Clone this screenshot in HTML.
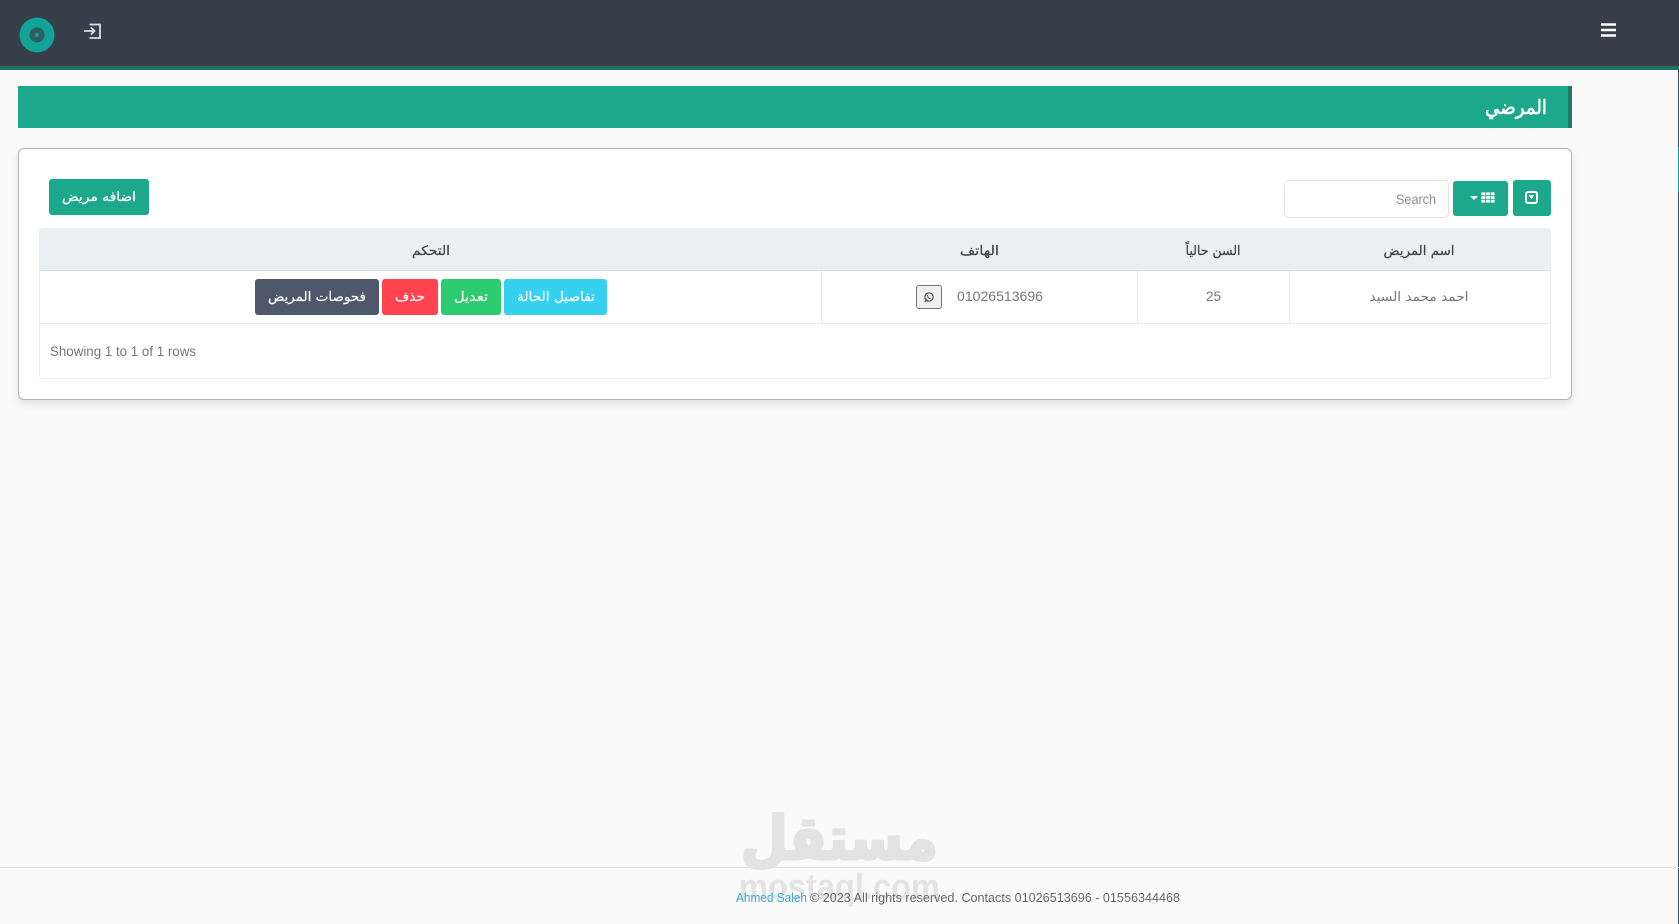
<!DOCTYPE html>
<html lang="ar"><head><meta charset="utf-8"><title>المرضي</title>
<style>
html,body{margin:0;padding:0;width:1679px;height:924px;overflow:hidden;background:#fafafa}
.a{position:absolute;box-sizing:border-box}
svg{position:absolute;left:0;top:0}
text{font-family:"DejaVu Sans",sans-serif}
.l{font-family:"Liberation Sans",sans-serif}
.s{stroke:currentColor;stroke-width:.25px}
</style></head><body>
<div class="a" style="left:0;top:0;width:1679px;height:66px;background:#37404a"></div>
<div class="a" style="left:0;top:66px;width:1679px;height:4px;background:#1f7361"></div>
<div class="a" style="left:1678px;top:70px;width:1px;height:854px;background:#3a4350"></div>
<div class="a" style="left:1678px;top:147px;width:1px;height:45px;background:#11a398"></div>
<div class="a" style="left:18px;top:86px;width:1554px;height:42px;background:#1ca88a;border-right:4px solid #217a66"></div>
<div class="a" style="left:18px;top:148px;width:1554px;height:252px;background:#fff;border:1px solid #b4b4b4;border-radius:6px;box-shadow:0 4px 8px rgba(0,0,0,.1)"></div>
<div class="a" style="left:49px;top:179px;width:100px;height:36px;background:#1ca88a;border-radius:3px"></div>
<div class="a" style="left:1284px;top:180px;width:165px;height:38px;background:#fff;border:1px solid #e2e2e2;border-radius:5px"></div>
<div class="a" style="left:1453px;top:181px;width:55px;height:35px;background:#1ca88a;border-radius:3px"></div>
<div class="a" style="left:1513px;top:180px;width:38px;height:36px;background:#1ca88a;border-radius:3px"></div>
<div class="a" style="left:39px;top:228px;width:1512px;height:151px;background:#fff;border:1px solid #eaecee;border-radius:4px"></div>
<div class="a" style="left:39px;top:228px;width:1512px;height:43px;background:#ebeff2;border-bottom:1px solid #d8dcdf;border-radius:4px 4px 0 0"></div>
<div class="a" style="left:40px;top:323px;width:1510px;height:1px;background:#e9ebed"></div>
<div class="a" style="left:1289px;top:271px;width:1px;height:52px;background:#e9ebed"></div>
<div class="a" style="left:1137px;top:271px;width:1px;height:52px;background:#e9ebed"></div>
<div class="a" style="left:821px;top:271px;width:1px;height:52px;background:#e9ebed"></div>
<div class="a" style="left:504px;top:279px;width:103px;height:36px;background:#36d1ee;border-radius:3px"></div>
<div class="a" style="left:441px;top:279px;width:60px;height:36px;background:#2ecc71;border-radius:3px"></div>
<div class="a" style="left:382px;top:279px;width:56px;height:36px;background:#ff434f;border-radius:3px"></div>
<div class="a" style="left:255px;top:279px;width:124px;height:36px;background:#4f586b;border-radius:3px"></div>
<div class="a" style="left:916px;top:285px;width:26px;height:24px;background:#f1f1f1;border:1px solid #777;border-radius:3px"></div>
<svg width="1679" height="924" viewBox="0 0 1679 924" xmlns="http://www.w3.org/2000/svg">
<circle cx="37" cy="35" r="17.5" fill="#11a398"/><circle cx="37" cy="35" r="7.500" fill="#2f5c62"/><circle cx="37" cy="35" r="2" fill="#11a398"/>
<path d="M89.500 24.500h10.500v13.500h-10.500M84 31h10.500M91 27.500l3.500 3.500-3.500 3.500" fill="none" stroke="#dcdee0" stroke-width="1.800"/>
<path d="M1601 24.500h15M1601 30h15M1601 35.500h15" stroke="#fff" stroke-width="2.600"/>
<path d="M1470 196h8l-4 4z" fill="#fff"/>
<path d="M1481 192h14v11h-14zM1485.700 192v11M1490.300 192v11M1481 195.700h14M1481 199.300h14" fill="#fff" stroke="#1ca88a" stroke-width=".8"/>
<rect x="1526" y="192" width="11" height="11" rx="2" fill="none" stroke="#fff" stroke-width="2"/><path d="M1528.500 195h6l-3 4z" fill="#fff"/>
<circle cx="929" cy="297" r="4.200" fill="none" stroke="#555" stroke-width="1.200"/><path d="M925.200 301.500l.8-2.500 1.500 1.500zM927.500 295.500c.3 2 1.300 3 3 3.200" fill="none" stroke="#555" stroke-width="1"/>
<text x="839.500" y="859" font-size="60" font-weight="700" text-anchor="middle" textLength="197" lengthAdjust="spacingAndGlyphs" fill="#e3e3e3" stroke="#e3e3e3" stroke-width="3" stroke-linejoin="round">مستقل</text>
<text x="839.500" y="899" class="l" font-size="36" font-weight="700" text-anchor="middle" textLength="201" lengthAdjust="spacingAndGlyphs" fill="#e3e3e3">mostaql.com</text>
<text x="1516" y="114" font-size="20" text-anchor="middle" textLength="62" lengthAdjust="spacingAndGlyphs" fill="#fff" stroke="#fff" stroke-width=".6">المرضي</text>
<text x="99" y="201" font-size="13" text-anchor="middle" textLength="74" lengthAdjust="spacingAndGlyphs" fill="#fff" stroke="#fff" stroke-width=".25">اضافه مريض</text>
<text x="1416" y="204" class="l" font-size="13.500" text-anchor="middle" textLength="40" lengthAdjust="spacingAndGlyphs" fill="#8c8c8c">Search</text>
<text x="1419" y="255" font-size="13" text-anchor="middle" textLength="71" lengthAdjust="spacingAndGlyphs" fill="#444" stroke="#444" stroke-width=".25">اسم المريض</text>
<text x="1213" y="255" font-size="13" text-anchor="middle" textLength="55" lengthAdjust="spacingAndGlyphs" fill="#444" stroke="#444" stroke-width=".25">السن حالياً</text>
<text x="979.500" y="255" font-size="13" text-anchor="middle" textLength="39" lengthAdjust="spacingAndGlyphs" fill="#444" stroke="#444" stroke-width=".25">الهاتف</text>
<text x="431" y="255" font-size="13" text-anchor="middle" textLength="38" lengthAdjust="spacingAndGlyphs" fill="#444" stroke="#444" stroke-width=".25">التحكم</text>
<text x="1419" y="301" font-size="13" text-anchor="middle" textLength="99" lengthAdjust="spacingAndGlyphs" fill="#777">احمد محمد السيد</text>
<text x="1213.500" y="301" class="l" font-size="14" text-anchor="middle" textLength="15" lengthAdjust="spacingAndGlyphs" fill="#777">25</text>
<text x="1000" y="301" class="l" font-size="14" text-anchor="middle" textLength="86" lengthAdjust="spacingAndGlyphs" fill="#777">01026513696</text>
<text x="556" y="301" font-size="13" text-anchor="middle" textLength="78" lengthAdjust="spacingAndGlyphs" fill="#fff" stroke="#fff" stroke-width=".2">تفاصيل الحالة</text>
<text x="471" y="301" font-size="13" text-anchor="middle" textLength="34" lengthAdjust="spacingAndGlyphs" fill="#fff" stroke="#fff" stroke-width=".2">تعديل</text>
<text x="410" y="301" font-size="13" text-anchor="middle" textLength="30" lengthAdjust="spacingAndGlyphs" fill="#fff" stroke="#fff" stroke-width=".2">حذف</text>
<text x="317" y="301" font-size="13" text-anchor="middle" textLength="98" lengthAdjust="spacingAndGlyphs" fill="#fff" stroke="#fff" stroke-width=".2">فحوصات المريض</text>
<text x="123" y="356" class="l" font-size="14" text-anchor="middle" textLength="146" lengthAdjust="spacingAndGlyphs" fill="#777">Showing 1 to 1 of 1 rows</text>
<rect x="0" y="867" width="1679" height="1" fill="#e2e2e2"/>
<text x="771.500" y="902" class="l" font-size="13" text-anchor="middle" textLength="71" lengthAdjust="spacingAndGlyphs" fill="#3aa5d8">Ahmed Saleh</text>
<text x="995" y="902" class="l" font-size="13" text-anchor="middle" textLength="370" lengthAdjust="spacingAndGlyphs" fill="#666">© 2023 All rights reserved. Contacts 01026513696 - 01556344468</text>
</svg>
</body></html>
